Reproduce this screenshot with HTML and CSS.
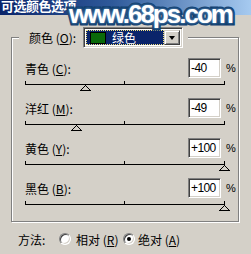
FILE: index.html
```html
<!DOCTYPE html>
<html lang="zh-CN">
<head>
<meta charset="utf-8">
<title>可选颜色选项</title>
<link rel="stylesheet" href="styles.css">
</head>
<body>
<div class="titlebar"><span class="title">可选颜色选项</span></div>
<div class="watermark">www.68ps.com</div>
<div class="group">
  <div class="group-head">
    <span class="head-lbl">颜色 (<u>O</u>):</span>
    <div class="combo">
      <div class="combo-field"><div class="focus"><span class="swatch"></span><span class="combo-text">绿色</span></div></div>
      <div class="combo-btn"><span class="arrow"></span></div>
    </div>
  </div>
  <div class="slider first">
    <div class="slider-top"><span class="s-lbl">青色 (<u>C</u>):</span><div class="num">-40</div><span class="pct">%</span></div>
    <div class="track"><span class="tick t0"></span><span class="tick t1"></span><span class="tick t2"></span><span class="thumb" style="left:30%"><svg width="11" height="6" viewBox="0 0 11 6"><polygon points="5.5,0.5 0.5,5.5 10.5,5.5" fill="none" stroke="#000" stroke-width="1"/></svg></span></div>
  </div>
  <div class="slider">
    <div class="slider-top"><span class="s-lbl">洋红 (<u>M</u>):</span><div class="num">-49</div><span class="pct">%</span></div>
    <div class="track"><span class="tick t0"></span><span class="tick t1"></span><span class="tick t2"></span><span class="thumb" style="left:25.5%"><svg width="11" height="6" viewBox="0 0 11 6"><polygon points="5.5,0.5 0.5,5.5 10.5,5.5" fill="none" stroke="#000" stroke-width="1"/></svg></span></div>
  </div>
  <div class="slider">
    <div class="slider-top"><span class="s-lbl">黄色 (<u>Y</u>):</span><div class="num">+100</div><span class="pct">%</span></div>
    <div class="track"><span class="tick t0"></span><span class="tick t1"></span><span class="tick t2"></span><span class="thumb" style="left:100%"><svg width="11" height="6" viewBox="0 0 11 6"><polygon points="5.5,0.5 0.5,5.5 10.5,5.5" fill="none" stroke="#000" stroke-width="1"/></svg></span></div>
  </div>
  <div class="slider">
    <div class="slider-top"><span class="s-lbl">黑色 (<u>B</u>):</span><div class="num">+100</div><span class="pct">%</span></div>
    <div class="track"><span class="tick t0"></span><span class="tick t1"></span><span class="tick t2"></span><span class="thumb" style="left:100%"><svg width="11" height="6" viewBox="0 0 11 6"><polygon points="5.5,0.5 0.5,5.5 10.5,5.5" fill="none" stroke="#000" stroke-width="1"/></svg></span></div>
  </div>
</div>
<div class="method">
  <span class="m-lbl">方法:</span>
  <span class="radio"></span>
  <span class="r-lbl r1">相对 (<u>R</u>)</span>
  <span class="radio checked"></span>
  <span class="r-lbl">绝对 (<u>A</u>)</span>
</div>
</body>
</html>
```

FILE: styles.css
```css
* { box-sizing: border-box; }
html, body { margin: 0; padding: 0; }
body {
  width: 251px;
  height: 254px;
  overflow: hidden;
  position: relative;
  background: #d4d0c8;
  color: #000;
  font-family: "Noto Sans CJK SC", "Liberation Sans", sans-serif;
  font-size: 12px;
}
u { text-decoration: underline; text-underline-offset: 1px; }

.titlebar {
  height: 15px;
  overflow: hidden;
  background: linear-gradient(to right, #0a246a 0%, #2f5a9a 45%, #a6caf0 100%);
}
.title {
  display: block;
  color: #fff;
  font-weight: bold;
  font-size: 13px;
  line-height: 12px;
  padding-left: 1px;
  letter-spacing: -0.5px;
}
.watermark {
  position: absolute;
  left: 69px;
  top: 0;
  line-height: 28px;
  font-family: "Liberation Sans", sans-serif;
  font-weight: bold;
  font-size: 26px;
  letter-spacing: -2px;
  color: #fff;
  -webkit-text-stroke: 5px #0f3c6c;
  paint-order: stroke fill;
  text-shadow: 0 0 3px #7fb0e0;
}

.group {
  margin: 22px 0 0 11px;
  width: 228px;
  border: 1px solid #808080;
  box-shadow: 1px 1px 0 #fff, inset 1px 1px 0 #fff;
  padding-bottom: 3px;
}
.group-head {
  display: flex;
  align-items: center;
  width: max-content;
  height: 21px;
  margin: -11px 0 0 7px;
  padding: 0 5px 0 10px;
  background: #d4d0c8;
}
.head-lbl { width: 54px; }
.combo {
  display: flex;
  width: 100px;
  height: 21px;
  border: 1px solid;
  border-color: #808080 #fff #fff #808080;
  box-shadow: inset 1px 1px 0 #404040, inset -1px -1px 0 #d4d0c8;
  padding: 2px;
  background: #fff;
}
.combo-field {
  flex: 1;
  background: #0a246a;
  padding: 0;
}
.focus {
  height: 100%;
  display: flex;
  align-items: center;
  border: 1px dotted #f0e080;
  padding-left: 3px;
}
.swatch {
  width: 16px;
  height: 12px;
  border: 1px solid #000;
  background: #0a6a0a;
}
.combo-text { color: #fff; margin-left: 6px; }
.combo-btn {
  width: 16px;
  display: flex;
  align-items: center;
  justify-content: center;
  background: #d4d0c8;
  border: 1px solid;
  border-color: #d4d0c8 #404040 #404040 #d4d0c8;
  box-shadow: inset 1px 1px 0 #fff, inset -1px -1px 0 #808080;
}
.arrow {
  width: 0; height: 0;
  border-left: 3.5px solid transparent;
  border-right: 3.5px solid transparent;
  border-top: 4px solid #000;
}

.slider { margin-left: 13px; height: 40px; }
.slider.first { margin-top: 10px; }
.slider-top { display: flex; align-items: center; height: 20px; }
.s-lbl { width: 163px; }
.num {
  width: 33px;
  height: 20px;
  border: 1px solid;
  border-color: #808080 #fff #fff #808080;
  box-shadow: inset 1px 1px 0 #404040, inset -1px -1px 0 #d4d0c8;
  background: #fff;
  font: 12px/18px "Liberation Sans", sans-serif;
  letter-spacing: -0.6px;
  padding-left: 2px;
}
.pct { margin-left: 5px; font: 11px "Liberation Sans", sans-serif; }
.track { position: relative; height: 20px; width: 199px; }
.track::before {
  content: "";
  position: absolute;
  left: 0; top: 6px;
  width: 200px; height: 1px;
  background: #000;
}
.tick { position: absolute; top: 3px; width: 1px; height: 3px; background: #000; }
.t0 { left: 0; }
.t1 { left: 99px; }
.t2 { left: 199px; }
.thumb { position: absolute; top: 7px; width: 11px; height: 6px; margin-left: -5px; }
.thumb svg { display: block; shape-rendering: crispEdges; }

.method {
  display: flex;
  align-items: center;
  height: 20px;
  margin-top: 7px;
  padding-left: 18px;
}
.m-lbl { width: 41px; }
.radio {
  position: relative;
  width: 12px;
  height: 12px;
  border-radius: 50%;
  background: #fff;
  border: 1px solid;
  border-color: #808080 #fff #fff #808080;
  box-shadow: inset 1px 1px 0 #404040, inset -1px -1px 0 #d4d0c8;
}
.radio.checked::after {
  content: "";
  position: absolute;
  left: 3px; top: 3px;
  width: 4px; height: 4px;
  border-radius: 50%;
  background: #000;
}
.r-lbl { margin-left: 5px; }
.r1 { width: 47px; }
.r-lbl:last-child { margin-left: 3px; }
```
